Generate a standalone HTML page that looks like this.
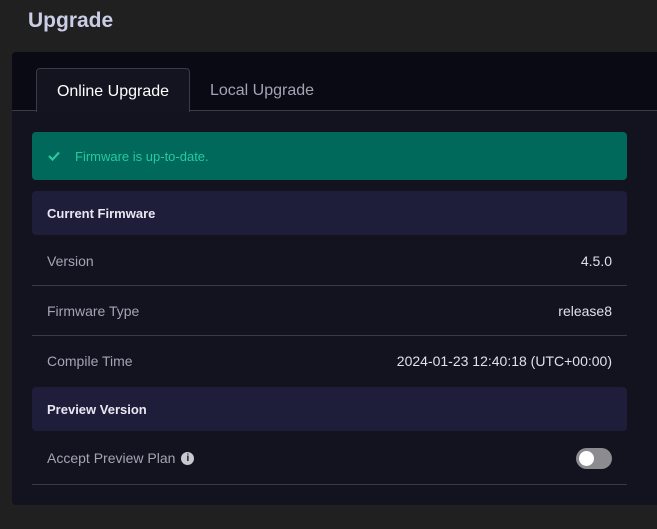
<!DOCTYPE html>
<html><head><style>
*{margin:0;padding:0;box-sizing:border-box}
body{width:657px;height:529px;background:#202020;font-family:"Liberation Sans",sans-serif;position:relative;overflow:hidden}
h1{position:absolute;left:28px;top:9px;font-size:21px;font-weight:bold;color:#c9cde6}
.card{position:absolute;left:12px;top:52px;width:660px;height:453px;background:#13131f;border-radius:4px}
.strip{position:absolute;left:0;top:0;right:0;height:59px;background:#0a0a14;border-bottom:1px solid #3a3a48;border-radius:4px 4px 0 0}
.tab{position:absolute;top:16px;height:44px;font-size:16px;line-height:46px;text-align:center}
.t1{left:24px;width:154px;background:#141421;border:1px solid #3a3a48;border-bottom:none;border-radius:4px 4px 0 0;color:#fff}
.t2{left:188px;width:124px;color:#a2a4b6}
.alert{position:absolute;left:20px;top:80px;width:595px;height:48px;background:#00695b;border-radius:4px;color:#28c99c;font-size:13px;line-height:49px;padding-left:43px}
.alert svg{position:absolute;left:16px;top:19px}
.hd{position:absolute;left:20px;width:595px;height:44px;background:#1e1e3a;border-radius:4px;color:#e8e8f2;font-weight:bold;font-size:13px;line-height:46px;padding-left:15px}
.row{position:absolute;left:20px;width:595px;height:50px;border-bottom:1px solid #3a3a45;font-size:14px;line-height:50px;color:#a3a5b5;padding:0 15px}
.row span.v{float:right;color:#e0e0ea}
.tg{position:absolute;right:15px;top:15px;width:36px;height:21px;border-radius:11px;background:#8b8b90}
.tg::after{content:"";position:absolute;left:3px;top:3px;width:15px;height:15px;border-radius:50%;background:#fff}
.i{display:inline-block;width:13px;height:13px;border-radius:50%;background:#c8c8d0;color:#13131f;font-size:10px;font-weight:bold;line-height:13px;text-align:center;vertical-align:middle;margin-left:6px;margin-top:-2px}
</style></head><body>
<h1>Upgrade</h1>
<div class="card">
<div class="strip"></div>
<div class="tab t1">Online Upgrade</div>
<div class="tab t2">Local Upgrade</div>
<div class="alert"><svg width="12" height="10" viewBox="0 0 12 10"><path d="M1 5l3.5 3.5L11 1.5" stroke="#28c99c" stroke-width="2.2" fill="none"/></svg>Firmware is up-to-date.</div>
<div class="hd" style="top:139px">Current Firmware</div>
<div class="row" style="top:184px">Version<span class="v">4.5.0</span></div>
<div class="row" style="top:234px">Firmware Type<span class="v">release8</span></div>
<div class="row" style="top:284px;border-bottom:none">Compile Time<span class="v">2024-01-23 12:40:18 (UTC+00:00)</span></div>
<div class="hd" style="top:335px">Preview Version</div>
<div class="row" style="top:381px;height:52px;line-height:50px">Accept Preview Plan<span class="i">i</span><div class="tg"></div></div>
</div>
</body></html>
